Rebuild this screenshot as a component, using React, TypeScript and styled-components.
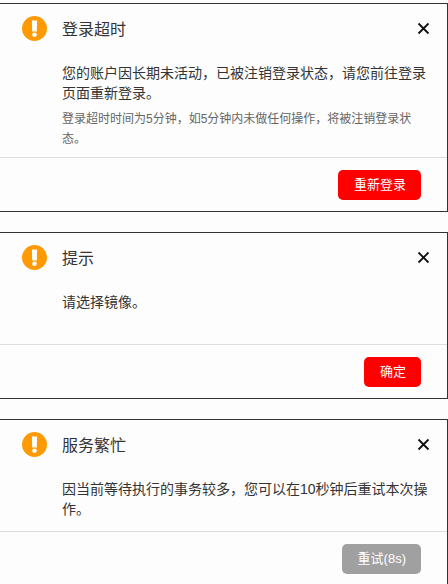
import React from "react";
import styled, { createGlobalStyle } from "styled-components";

const GlobalStyle = createGlobalStyle`
  *, *::before, *::after { box-sizing: border-box; }
  body {
    margin: 0;
    background: #fdfdfd;
    font-family: "Liberation Sans", "Noto Sans CJK SC", sans-serif;
  }
  h2, p { margin: 0; font-weight: 400; }
`;

const Page = styled.main`
  display: flex;
  flex-direction: column;
  gap: 20px;
  max-height: 100vh;
  padding-top: 3px;
  overflow: hidden;
`;

const Dialog = styled.section`
  flex: none;
  border: 1px solid #333;
  border-left: 0;
  background: #fdfdfd;
`;

const Header = styled.header`
  display: flex;
  align-items: center;
  height: 49px;
  padding: 0 16px 0 22px;
`;

const Title = styled.h2`
  flex: 1;
  margin-left: 15px;
  padding-top: 3px;
  font-size: 16px;
  line-height: 24px;
  color: #333;
`;

const CloseButton = styled.button`
  display: flex;
  padding: 0;
  border: 0;
  background: none;
  cursor: pointer;
`;

const Body = styled.div`
  min-height: 62px;
  padding: 10px 16px 8px 62px;
`;

const Message = styled.p`
  font-size: 14px;
  line-height: 20px;
  color: #333;
`;

const Note = styled.p`
  padding-top: 6px;
  font-size: 12px;
  line-height: 20px;
  color: #666;
`;

const Footer = styled.footer`
  display: flex;
  justify-content: flex-end;
  padding: 12px 26px 11px;
  border-top: 1px solid #ddd;
`;

const ActionButton = styled.button`
  height: 30px;
  padding: 0 15px 0 16px;
  border: 0;
  border-radius: 5px;
  background: #f00;
  color: #fff;
  font-family: inherit;
  font-size: 13px;
  line-height: 20px;
  cursor: pointer;

  &:disabled {
    background: #a0a0a0;
    cursor: default;
  }
`;

const WarningIcon = () => (
  <svg width="25" height="25" viewBox="0 0 25 25" aria-hidden="true">
    <circle cx="12.5" cy="12.5" r="12.5" fill="#ff9a05" />
    <path d="M9.9 4.6h5.2l-.3 11h-4.6z" fill="#fff" />
    <circle cx="12.5" cy="18.7" r="2.3" fill="#fff" />
  </svg>
);

const CloseIcon = () => (
  <svg width="15" height="15" viewBox="0 0 15 15" aria-hidden="true">
    <path d="M2.5 2.5l10 10M12.5 2.5l-10 10" stroke="#111" strokeWidth="1.8" fill="none" />
  </svg>
);

interface Notice {
  id: string;
  title: string;
  message: string;
  note?: string;
  action: string;
  waiting?: boolean;
}

const notices: Notice[] = [
  {
    id: "timeout",
    title: "登录超时",
    message: "您的账户因长期未活动，已被注销登录状态，请您前往登录页面重新登录。",
    note: "登录超时时间为5分钟，如5分钟内未做任何操作，将被注销登录状态。",
    action: "重新登录",
  },
  { id: "prompt", title: "提示", message: "请选择镜像。", action: "确定" },
  {
    id: "busy",
    title: "服务繁忙",
    message: "因当前等待执行的事务较多，您可以在10秒钟后重试本次操作。",
    action: "重试(8s)",
    waiting: true,
  },
];

export default function App() {
  return (
    <>
      <GlobalStyle />
      <Page lang="zh-CN">
        {notices.map((n) => (
          <Dialog key={n.id} role="dialog" aria-labelledby={n.id}>
            <Header>
              <WarningIcon />
              <Title id={n.id}>{n.title}</Title>
              <CloseButton type="button" aria-label="关闭">
                <CloseIcon />
              </CloseButton>
            </Header>
            <Body>
              <Message>{n.message}</Message>
              {n.note && <Note>{n.note}</Note>}
            </Body>
            <Footer>
              <ActionButton type="button" disabled={n.waiting}>
                {n.action}
              </ActionButton>
            </Footer>
          </Dialog>
        ))}
      </Page>
    </>
  );
}
